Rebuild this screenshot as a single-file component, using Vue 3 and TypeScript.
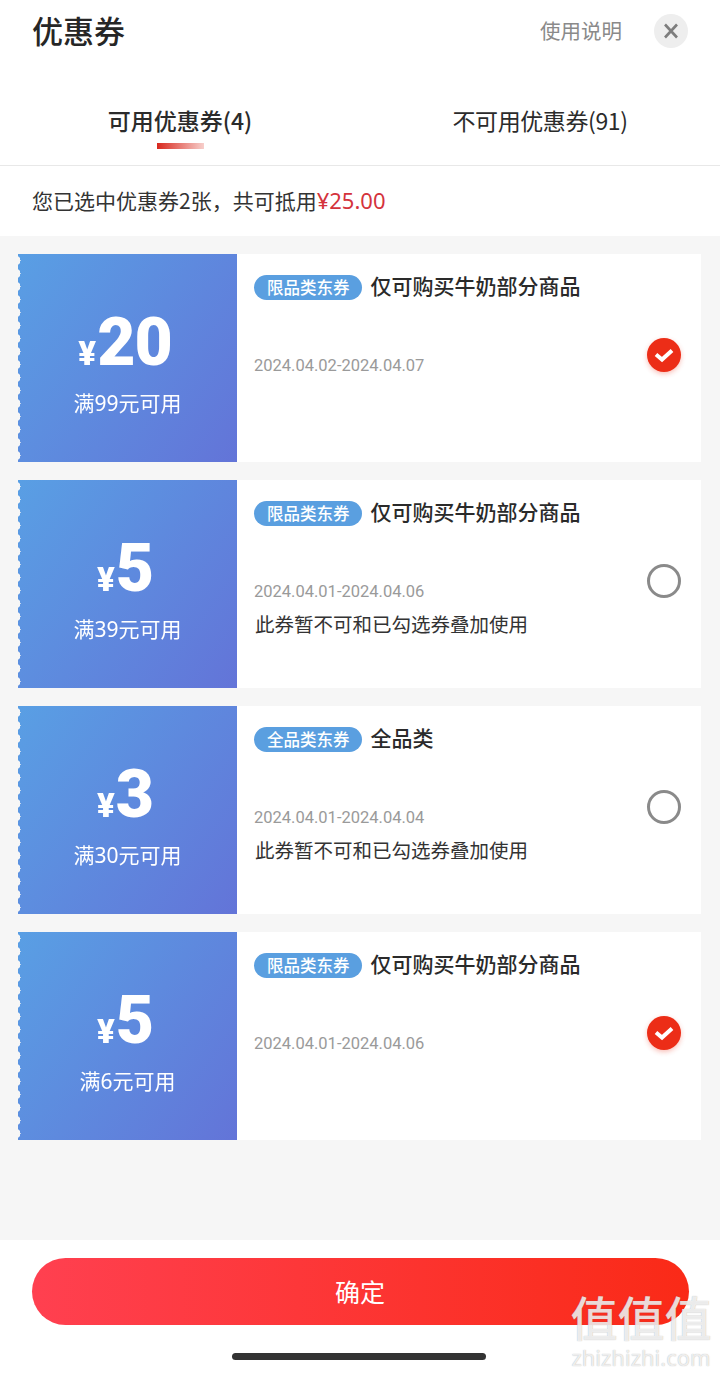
<script setup lang="ts">
interface Coupon {
  amount: string
  rule: string
  tag: string
  title: string
  date: string
  note?: string
  checked: boolean
}

const coupons: Coupon[] = [
  { amount: '20', rule: '满99元可用', tag: '限品类东券', title: '仅可购买牛奶部分商品', date: '2024.04.02-2024.04.07', checked: true },
  { amount: '5', rule: '满39元可用', tag: '限品类东券', title: '仅可购买牛奶部分商品', date: '2024.04.01-2024.04.06', note: '此券暂不可和已勾选券叠加使用', checked: false },
  { amount: '3', rule: '满30元可用', tag: '全品类东券', title: '全品类', date: '2024.04.01-2024.04.04', note: '此券暂不可和已勾选券叠加使用', checked: false },
  { amount: '5', rule: '满6元可用', tag: '限品类东券', title: '仅可购买牛奶部分商品', date: '2024.04.01-2024.04.06', checked: true },
]
</script>

<template>
  <div class="page">
    <header class="head">
      <h1 class="head-title">优惠券</h1>
      <span class="head-help">使用说明</span>
      <button class="close" aria-label="关闭">
        <svg width="16" height="16" viewBox="0 0 16 16"><path d="M2 1.5 L14 14.5 M14 1.5 L2 14.5" stroke="#7d7d7d" stroke-width="2.6" fill="none" /></svg>
      </button>
    </header>

    <nav class="tabs">
      <div class="tab tab-active">
        <span>可用优惠券(4)</span>
        <i class="tab-bar"></i>
      </div>
      <div class="tab tab-off"><span>不可用优惠券(91)</span></div>
    </nav>

    <div class="summary">您已选中优惠券2张，共可抵用<span class="summary-sum">¥25.00</span></div>

    <main class="list">
      <article v-for="(c, i) in coupons" :key="i" class="card">
        <div class="stub">
          <div class="amount"><span class="yen">¥</span><span class="num">{{ c.amount }}</span></div>
          <div class="rule">{{ c.rule }}</div>
        </div>
        <div class="info">
          <div class="info-top">
            <span class="tag">{{ c.tag }}</span>
            <span class="title">{{ c.title }}</span>
          </div>
          <div class="date">{{ c.date }}</div>
          <div v-if="c.note" class="note">{{ c.note }}</div>
          <span v-if="c.checked" class="check">
            <svg width="22" height="18" viewBox="0 0 22 18"><path d="M3 8.5 L9 13.5 L19 4.5" stroke="#fff" stroke-width="4" fill="none" /></svg>
          </span>
          <span v-else class="radio"></span>
        </div>
      </article>
    </main>

    <footer class="foot">
      <button class="confirm">确定</button>
      <i class="home-bar"></i>
    </footer>

    <div class="mark">
      <span class="mark-big">值值值</span>
      <span class="mark-small">zhizhizhi.com</span>
    </div>
  </div>
</template>

<style>
html, body { margin: 0; background: #fff; }
</style>

<style scoped>
.page {
  position: relative;
  width: 720px;
  height: 1373px;
  display: flex;
  flex-direction: column;
  overflow: hidden;
  background: #fff;
  font-family: "Noto Sans CJK SC", "Noto Sans", sans-serif;
  color: #262626;
}
.head {
  height: 62px;
  display: flex;
  align-items: center;
  padding: 0 32px;
  flex: none;
}
.head-title {
  margin: 0;
  flex: 1;
  font-size: 31px;
  font-weight: 500;
  line-height: 60px;
  height: 62px;
}
.head-help {
  font-size: 20.5px;
  line-height: 30px;
  color: #8a8a8a;
  margin-right: 32px;
  margin-bottom: 2px;
}
.close {
  width: 34px;
  height: 34px;
  border: 0;
  padding: 0;
  border-radius: 50%;
  background: #eeeeee;
  display: flex;
  align-items: center;
  justify-content: center;
}
.tabs {
  height: 103px;
  flex: none;
  display: flex;
  border-bottom: 1px solid #e8e8e8;
}
.tab {
  flex: 1;
  display: flex;
  flex-direction: column;
  align-items: center;
  padding-top: 41px;
  font-size: 23px;
  line-height: 34px;
  color: #2b2b2b;
}
.tab-off { letter-spacing: -0.4px; }
.tab-active { font-weight: 500; }
.tab-bar {
  display: block;
  width: 47px;
  height: 6px;
  margin-top: 6px;
  background: linear-gradient(90deg, #d8281e, #f7cfcb);
}
.summary {
  height: 68px;
  padding-bottom: 2px;
  flex: none;
  display: flex;
  align-items: center;
  padding-left: 32px;
  font-size: 21px;
  color: #333;
}
.summary-sum {
  color: #d4333c;
  font-family: "Noto Sans", sans-serif;
  font-size: 22px;
}
.list {
  flex: 1;
  min-height: 0;
  background: #f6f6f6;
  padding: 18px 19px 0 18px;
  display: flex;
  flex-direction: column;
  gap: 18px;
}
.card {
  height: 208px;
  flex: none;
  display: flex;
}
.stub {
  width: 219px;
  flex: none;
  display: flex;
  flex-direction: column;
  align-items: center;
  color: #fff;
  background: linear-gradient(125deg, #599fe4, #6374d8);
  -webkit-mask:
    radial-gradient(circle 5px at -2.4px 6.5px, transparent 97%, #000) 0 0 / 6px 13px repeat-y,
    linear-gradient(#000, #000) right / calc(100% - 6px) 100% no-repeat;
  mask:
    radial-gradient(circle 5px at -2.4px 6.5px, transparent 97%, #000) 0 0 / 6px 13px repeat-y,
    linear-gradient(#000, #000) right / calc(100% - 6px) 100% no-repeat;
}
.amount {
  display: flex;
  align-items: baseline;
  margin-top: 47px;
  height: 84px;
  line-height: 84px;
  margin-right: 5px;
}
.yen {
  font-family: Roboto, sans-serif;
  font-size: 33px;
  font-weight: 900;
  margin-right: 1px;
}
.num {
  font-family: Roboto, sans-serif;
  font-size: 66px;
  font-weight: 900;
  letter-spacing: -1px;
}
.rule {
  font-size: 21px;
  line-height: 30px;
  margin-top: 3px;
  font-family: "Noto Sans", "Noto Sans CJK SC", sans-serif;
}
.info {
  position: relative;
  flex: 1;
  background: #fff;
  padding: 21px 0 0 17px;
}
.info-top {
  display: flex;
  align-items: center;
  height: 25px;
}
.tag {
  height: 25px;
  line-height: 24px;
  padding: 0 12px 0 13px;
  border-radius: 13px;
  background: #5a9fe0;
  color: #fff;
  font-size: 16.5px;
  font-weight: 500;
  margin-right: 9px;
}
.title {
  font-size: 21px;
  font-weight: 500;
  line-height: 25px;
  margin-bottom: 4px;
  color: #2a2a2a;
}
.date {
  margin-top: 54px;
  font-family: Roboto, sans-serif;
  font-size: 16.5px;
  line-height: 24px;
  color: #9a9a9a;
}
.note {
  margin-top: 6px;
  margin-left: 1px;
  font-size: 19.5px;
  line-height: 28px;
  color: #333;
}
.check, .radio {
  position: absolute;
  left: 410px;
  top: 84px;
  width: 34px;
  height: 34px;
  box-sizing: border-box;
  border-radius: 50%;
}
.check {
  background: #ec2d17;
  box-shadow: 0 2px 5px rgba(236, 45, 23, .3);
  display: flex;
  align-items: center;
  justify-content: center;
}
.radio {
  border: 3px solid #8a8a8a;
}
.foot {
  height: 133px;
  flex: none;
  display: flex;
  flex-direction: column;
  align-items: center;
  background: #fff;
}
.confirm {
  width: 657px;
  height: 67px;
  margin-top: 18px;
  padding: 0 0 2px;
  border: 0;
  border-radius: 34px;
  background: linear-gradient(90deg, #ff4050, #fa2a17);
  color: #fff;
  font-family: inherit;
  font-size: 25px;
}
.home-bar {
  display: block;
  width: 254px;
  height: 7px;
  margin-top: 28px;
  border-radius: 4px;
  background: #333;
  margin-left: -2px;
}
.mark {
  position: absolute;
  left: 570px;
  top: 1290px;
  width: 142px;
  display: flex;
  flex-direction: column;
  align-items: center;
  color: rgba(255, 255, 255, .8);
  text-shadow: 0 0 1px rgba(110, 110, 110, .6);
}
.mark-big {
  font-size: 47px;
  font-weight: 500;
  line-height: 52px;
  height: 52px;
  white-space: nowrap;
}
.mark-small {
  font-family: "Noto Sans", sans-serif;
  font-size: 22px;
  line-height: 24px;
  margin-top: 3px;
  white-space: nowrap;
}
</style>
